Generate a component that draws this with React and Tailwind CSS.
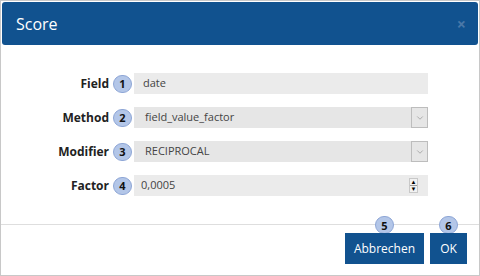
import { ChevronDown } from "lucide-react";

function Badge({ n }) {
  return (
    <span className="flex h-[18px] w-[19px] shrink-0 items-center justify-center rounded-full border border-[#8ea6d6] bg-[#b3c6e8] text-[11px] font-bold leading-none text-[#111]">
      {n}
    </span>
  );
}

function Row({ label, n, children }) {
  return (
    <div className="flex h-[21px] items-center">
      <span className="w-[108px] text-right text-[12px] font-bold text-[#222]">{label}</span>
      <div className="ml-[4px] mr-[2px]">
        <Badge n={n} />
      </div>
      {children}
    </div>
  );
}

export default function App() {
  return (
    <div
      className="flex h-[276px] w-[480px] flex-col border border-[#c8c8c8] bg-white"
      style={{ fontFamily: '"Open Sans", sans-serif' }}
    >
      <div className="mx-px mt-px flex h-[43px] shrink-0 items-center justify-between rounded-[3px] bg-[#11528f] pl-[14px] pr-[12px]">
        <span className="text-[16px] text-white">Score</span>
        <span className="text-[16px] font-bold leading-none text-[#4a78a8]">×</span>
      </div>

      <div className="flex flex-col gap-[13px] pt-[28px]">
        <Row label="Field" n="1">
          <div className="flex h-[21px] w-[294px] items-center bg-[#ebebeb] px-[9px] text-[11px] text-[#444]">
            date
          </div>
        </Row>
        <Row label="Method" n="2">
          <div className="flex h-[21px] w-[294px] items-center bg-[#e6e6e6] text-[11px] text-[#444]">
            <span className="flex-1 pl-[11px]">field_value_factor</span>
            <span className="flex h-full w-[17px] items-center justify-center border border-[#bdbdbd] bg-[#e6e6e6]">
              <ChevronDown size={10} className="text-[#888]" strokeWidth={1.5} />
            </span>
          </div>
        </Row>
        <Row label="Modifier" n="3">
          <div className="flex h-[21px] w-[294px] items-center bg-[#e6e6e6] text-[11px] text-[#444]">
            <span className="flex-1 pl-[11px]">RECIPROCAL</span>
            <span className="flex h-full w-[17px] items-center justify-center border border-[#bdbdbd] bg-[#e6e6e6]">
              <ChevronDown size={10} className="text-[#888]" strokeWidth={1.5} />
            </span>
          </div>
        </Row>
        <Row label="Factor" n="4">
          <div className="flex h-[21px] w-[294px] items-center bg-[#ebebeb] pl-[7px] pr-[10px] text-[11px] text-[#444]">
            <span className="flex-1">0,0005</span>
            <span className="flex h-[15px] w-[9px] flex-col items-center justify-center border border-[#c8c8c8] bg-[#f2f2f2] text-[6px] leading-[6px] text-black">
              <span>▲</span>
              <span className="h-px w-full bg-[#999]" />
              <span>▼</span>
            </span>
          </div>
        </Row>
      </div>

      <div className="mt-[28px] border-t border-[#dedede]" />

      <div className="flex justify-end gap-[6px] pr-[12px]">
        <div className="flex flex-col items-center">
          <div className="-mt-[9px]">
            <Badge n="5" />
          </div>
          <button className="mt-[-1px] h-[31px] w-[79px] bg-[#11528f] text-[12px] text-white">Abbrechen</button>
        </div>
        <div className="flex flex-col items-center">
          <div className="-mt-[9px]">
            <Badge n="6" />
          </div>
          <button className="mt-[-1px] h-[31px] w-[37px] bg-[#11528f] text-[12px] text-white">OK</button>
        </div>
      </div>
    </div>
  );
}
